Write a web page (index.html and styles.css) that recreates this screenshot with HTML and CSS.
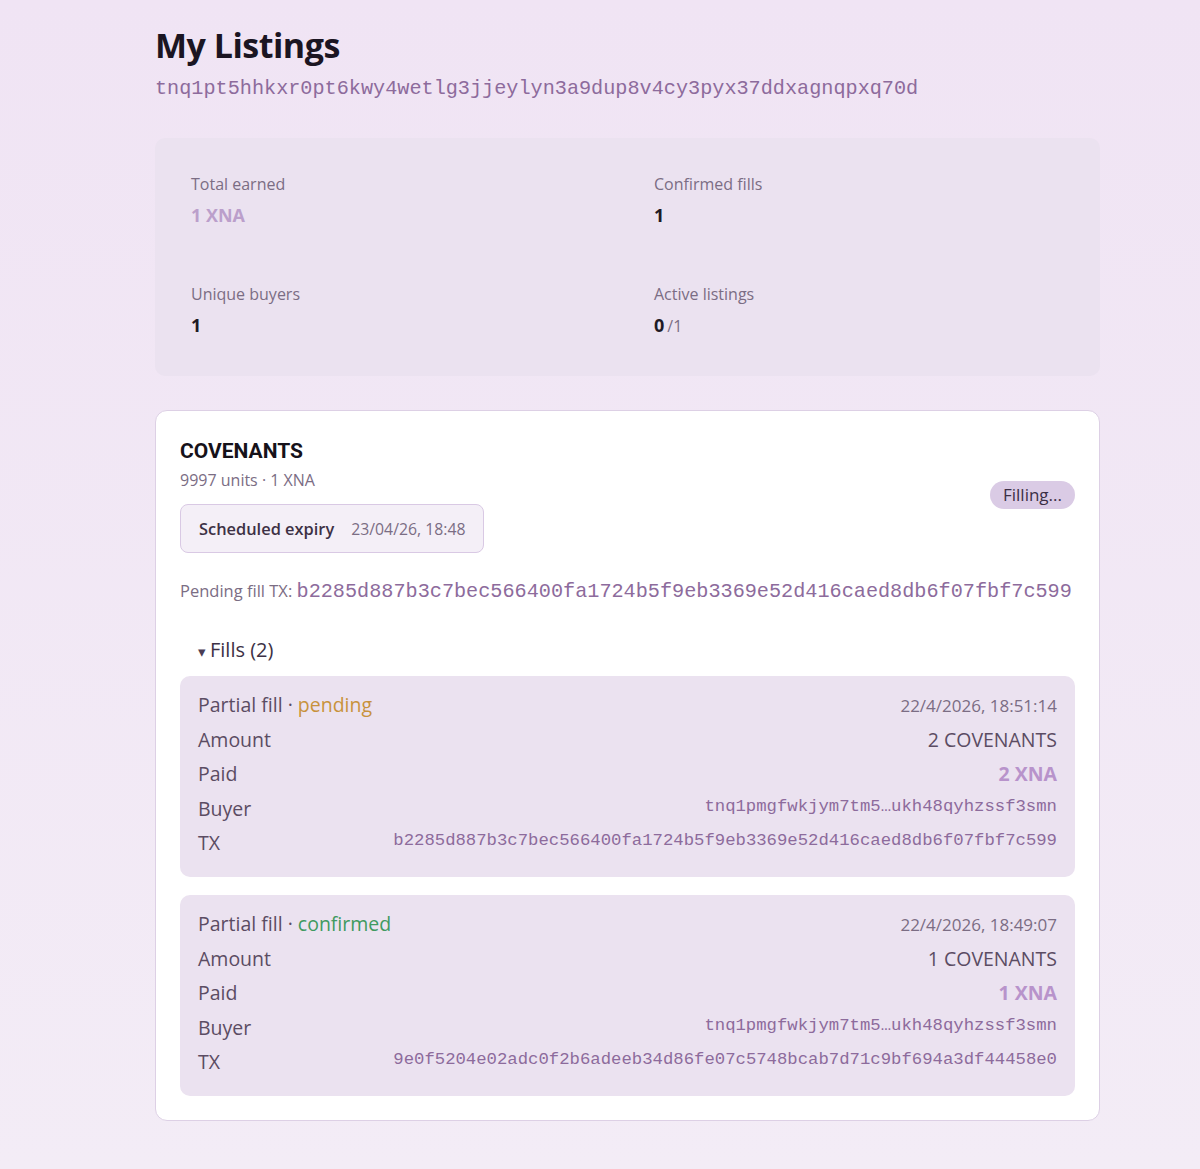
FILE: index.html
```html
<!DOCTYPE html>
<html lang="en">
<head>
<meta charset="utf-8">
<title>My Listings</title>
<link rel="stylesheet" href="styles.css">
</head>
<body>
<main class="page">
  <h1 class="title">My Listings</h1>
  <div class="address">tnq1pt5hhkxr0pt6kwy4wetlg3jjeylyn3a9dup8v4cy3pyx37ddxagnqpxq70d</div>

  <section class="stats">
    <div class="stat">
      <div class="stat-label">Total earned</div>
      <div class="stat-value accent">1 XNA</div>
    </div>
    <div class="stat">
      <div class="stat-label">Confirmed fills</div>
      <div class="stat-value">1</div>
    </div>
    <div class="stat">
      <div class="stat-label">Unique buyers</div>
      <div class="stat-value">1</div>
    </div>
    <div class="stat">
      <div class="stat-label">Active listings</div>
      <div class="stat-value">0<span class="of">/1</span></div>
    </div>
  </section>

  <section class="listing">
    <div class="listing-head">
      <div class="listing-info">
        <div class="asset">COVENANTS</div>
        <div class="units">9997 units · 1 XNA</div>
        <div class="expiry"><span class="expiry-label">Scheduled expiry</span><span class="expiry-date">23/04/26, 18:48</span></div>
      </div>
      <span class="badge">Filling...</span>
    </div>
    <div class="pending">Pending fill TX: <span class="pending-hash">b2285d887b3c7bec566400fa1724b5f9eb3369e52d416caed8db6f07fbf7c599</span></div>

    <details class="fills" open>
      <summary class="fills-summary"><span class="tri">▾</span>Fills (2)</summary>
      <div class="fill">
        <div class="fill-row head">
          <span class="fill-title">Partial fill · <span class="st-pending">pending</span></span>
          <span class="fill-date">22/4/2026, 18:51:14</span>
        </div>
        <div class="fill-row"><span>Amount</span><span>2 COVENANTS</span></div>
        <div class="fill-row"><span>Paid</span><span class="paid">2 XNA</span></div>
        <div class="fill-row mono-row"><span>Buyer</span><span class="mono">tnq1pmgfwkjym7tm5…ukh48qyhzssf3smn</span></div>
        <div class="fill-row mono-row"><span>TX</span><span class="mono">b2285d887b3c7bec566400fa1724b5f9eb3369e52d416caed8db6f07fbf7c599</span></div>
      </div>
      <div class="fill">
        <div class="fill-row head">
          <span class="fill-title">Partial fill · <span class="st-confirmed">confirmed</span></span>
          <span class="fill-date">22/4/2026, 18:49:07</span>
        </div>
        <div class="fill-row"><span>Amount</span><span>1 COVENANTS</span></div>
        <div class="fill-row"><span>Paid</span><span class="paid">1 XNA</span></div>
        <div class="fill-row mono-row"><span>Buyer</span><span class="mono">tnq1pmgfwkjym7tm5…ukh48qyhzssf3smn</span></div>
        <div class="fill-row mono-row"><span>TX</span><span class="mono">9e0f5204e02adc0f2b6adeeb34d86fe07c5748bcab7d71c9bf694a3df44458e0</span></div>
      </div>
    </details>
  </section>
</main>
</body>
</html>
```

FILE: styles.css
```css
* { box-sizing: border-box; }

html, body {
  margin: 0;
  padding: 0;
}

body {
  min-height: 1169px;
  background: linear-gradient(180deg, #f0e4f4 0%, #f3ecf6 100%);
  font-family: "Open Sans", "Noto Sans", sans-serif;
  color: #2a2230;
}

.page {
  width: 945px;
  margin-left: 155px;
  padding: 25px 0 49px;
}

.title {
  margin: 0;
  font-size: 34px;
  line-height: 40px;
  font-weight: 700;
  color: #1b1522;
  letter-spacing: -0.5px;
}

.address {
  margin-top: 12px;
  font-family: "Liberation Mono", monospace;
  font-size: 20.2px;
  line-height: 24px;
  color: #8d6b9c;
}

.stats {
  margin-top: 37px;
  background: #ebe2f0;
  border-radius: 10px;
  padding: 36px 36px 37px;
  display: grid;
  grid-template-columns: 1fr 1fr;
  column-gap: 53px;
  row-gap: 56px;
}

.stat-label {
  font-size: 16px;
  line-height: 20px;
  color: #7b6d84;
}

.stat-value {
  margin-top: 8px;
  font-size: 18px;
  line-height: 26px;
  font-weight: 700;
  color: #1f1a25;
}

.stat-value.accent { color: #bb9fcb; }

.stat-value .of {
  margin-left: 3px;
  font-size: 16px;
  font-weight: 400;
  color: #7b6d84;
}

.listing {
  margin-top: 34px;
  background: #ffffff;
  border: 1px solid #ddd0e5;
  border-radius: 12px;
  padding: 26px 24px 24px;
}

.listing-head {
  display: flex;
  justify-content: space-between;
  align-items: center;
}

.asset {
  font-family: Roboto, "Liberation Sans", sans-serif;
  font-size: 21px;
  line-height: 28px;
  font-weight: 700;
  color: #16121a;
}

.units {
  margin-top: 5px;
  font-size: 16px;
  line-height: 20px;
  color: #7b6d84;
}

.expiry {
  margin-top: 14px;
  display: inline-flex;
  align-items: center;
  gap: 17px;
  height: 49px;
  padding: 0 18px;
  border: 1px solid #d9c9e4;
  border-radius: 8px;
  background: #f4eff7;
}

.expiry-label {
  font-size: 16.4px;
  font-weight: 600;
  color: #3d3145;
}

.expiry-date {
  font-size: 15.8px;
  color: #7b6d84;
}

.badge {
  display: inline-block;
  padding: 2px 13px;
  border-radius: 14px;
  background: #dacbe5;
  font-size: 17px;
  line-height: 24px;
  color: #3b2f45;
}

.pending {
  margin-top: 24px;
  font-size: 16.5px;
  line-height: 28px;
  white-space: nowrap;
  color: #7b6d84;
}

.pending-hash {
  font-family: "Liberation Mono", monospace;
  font-size: 20.2px;
  color: #8d6b9c;
}

.fills { margin-top: 32px; }

.fills-summary {
  list-style: none;
  padding-left: 18px;
  font-size: 20px;
  line-height: 24px;
  color: #3d3145;
  cursor: pointer;
}

.fills-summary::-webkit-details-marker { display: none; }

.tri {
  font-size: 15px;
  margin-right: 4px;
  color: #4a3d55;
}

.fill {
  margin-top: 13px;
  background: #ebe2f0;
  border-radius: 10px;
  padding: 12px 18px 16px;
}

.fill + .fill { margin-top: 18.5px; }

.fill-row {
  display: flex;
  justify-content: space-between;
  align-items: baseline;
  height: 34.5px;
  line-height: 34.5px;
  font-size: 19.5px;
  color: #5b4c63;
}

.fill-row.mono-row { align-items: center; }

.fill-date {
  font-size: 17px;
  color: #7b6d84;
}

.st-pending { color: #c8923c; }
.st-confirmed { color: #3f9a60; }

.paid {
  font-weight: 700;
  color: #b893cb;
}

.mono {
  font-family: "Liberation Mono", monospace;
  font-size: 17.3px;
  line-height: 24px;
  margin-top: -4px;
  color: #8d6b9c;
}
```
